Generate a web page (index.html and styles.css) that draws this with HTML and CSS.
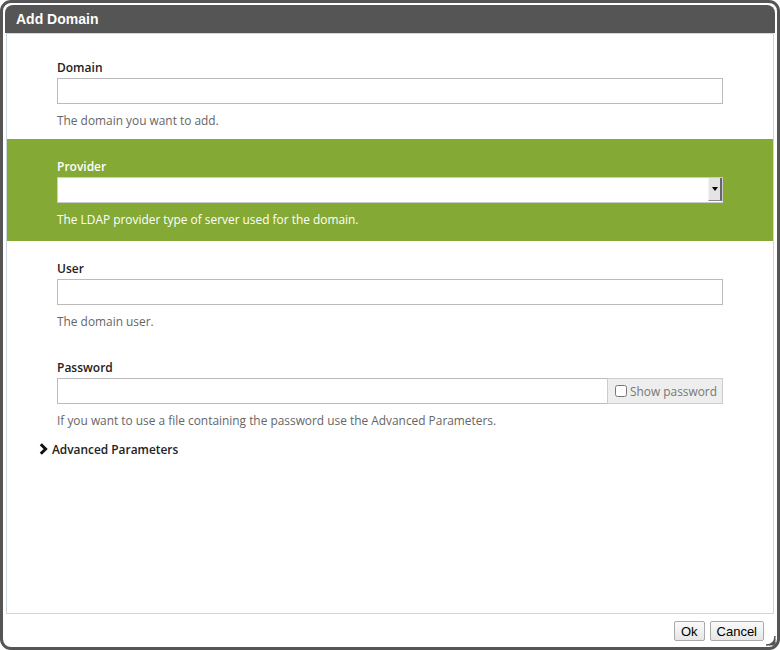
FILE: index.html
```html
<!DOCTYPE html>
<html lang="en">
<head>
    <meta charset="UTF-8">
    <title>Add Domain</title>
    <link rel="stylesheet" href="styles.css">
</head>
<body>
    <div class="dialog">
        <div class="dialog-title">Add Domain</div>
        <div class="dialog-body">
            <div class="form-group">
                <label for="domain">Domain</label>
                <input type="text" id="domain">
                <p class="hint">The domain you want to add.</p>
            </div>
            <div class="form-group active">
                <label for="provider">Provider</label>
                <div class="select">
                    <select id="provider"></select>
                    <span class="select-arrow"></span>
                </div>
                <p class="hint">The LDAP provider type of server used for the domain.</p>
            </div>
            <div class="form-group">
                <label for="user">User</label>
                <input type="text" id="user">
                <p class="hint">The domain user.</p>
            </div>
            <div class="form-group">
                <label for="password">Password</label>
                <div class="input-group">
                    <input type="password" id="password">
                    <label class="addon"><input type="checkbox">Show password</label>
                </div>
                <p class="hint">If you want to use a file containing the password use the Advanced Parameters.</p>
            </div>
            <div class="advanced">
                <svg width="9" height="12" viewBox="0 0 9 12"><path d="M1.8 1.2 L6.6 6 L1.8 10.8" fill="none" stroke="#111" stroke-width="3"/></svg>
                Advanced Parameters
            </div>
        </div>
        <div class="dialog-footer">
            <button class="btn">Ok</button>
            <button class="btn">Cancel</button>
            <svg class="grip" width="12" height="12" viewBox="0 0 12 12">
                <path d="M11 2 Q11 11 2 11 M11 5 Q11 11 5 11 M11 8 Q11 11 8 11" fill="none" stroke="#555" stroke-width="1.5"/>
            </svg>
        </div>
    </div>
</body>
</html>
```

FILE: styles.css
```css
body {
    margin: 0;
    background: #fff;
    font-family: 'Open Sans', sans-serif;
}
.dialog {
    width: 780px;
    height: 650px;
    box-sizing: border-box;
    border: 3px solid #555;
    border-radius: 11px;
    padding: 2px 2px 0 2px;
    display: flex;
    flex-direction: column;
}
.dialog-title {
    height: 28px;
    line-height: 28px;
    background: #555;
    color: #fff;
    border-radius: 8px 8px 0 0;
    padding-left: 11px;
    font-family: 'Liberation Sans', Arial, sans-serif;
    font-weight: bold;
    font-size: 14px;
}
.dialog-body {
    flex: 1;
    margin: 0 1px 0 1px;
    border: 1px solid #cdd6de;
    padding-top: 6px;
}
.form-group {
    padding: 20px 50px 11px;
}
.form-group.active {
    background: #84a934;
    padding-bottom: 14px;
}
.form-group label {
    display: block;
    font-size: 12px;
    font-weight: 600;
    color: #222;
    line-height: 16px;
    margin-bottom: 2px;
}
.form-group.active label,
.form-group.active .hint {
    color: #fff;
}
.form-group input[type=text],
.form-group input[type=password],
.select select {
    display: block;
    width: 100%;
    height: 26px;
    box-sizing: border-box;
    border: 1px solid #bbb;
    margin: 0;
    padding: 3px 6px;
    font-family: 'Open Sans', sans-serif;
    font-size: 12px;
    background: #fff;
}
.select {
    position: relative;
}
.select select {
    appearance: none;
    -webkit-appearance: none;
    border-color: #ccc;
}
.select-arrow {
    position: absolute;
    right: 1px;
    top: 1px;
    width: 11px;
    height: 22px;
    background: #e4e4e4;
    border-left: 1px solid #f4f4f4;
    border-right: 2px solid #666;
    border-bottom: 1px solid #888;
}
.select-arrow::after {
    content: '';
    position: absolute;
    left: 3px;
    top: 9px;
    border-left: 3px solid transparent;
    border-right: 3px solid transparent;
    border-top: 4px solid #000;
}
.hint {
    margin: 8px 0 0;
    font-size: 11.9px;
    line-height: 16px;
    color: #666;
}
.input-group {
    display: flex;
}
.input-group input[type=password] {
    flex: 1;
    border-right: none;
}
.form-group .addon {
    display: flex;
    align-items: center;
    flex: none;
    width: 116px;
    height: 26px;
    box-sizing: border-box;
    margin: 0;
    padding: 0 0 0 7px;
    background: #eee;
    border: 1px solid #ccc;
    font-weight: normal;
    color: #777;
    font-size: 11.9px;
    white-space: nowrap;
}
.addon input {
    margin: 0 3px 0 0;
    width: 12px;
    height: 12px;
}
.advanced {
    display: flex;
    align-items: center;
    gap: 4px;
    margin: 2px 0 0 32px;
    font-size: 11.9px;
    font-weight: 600;
    color: #222;
    line-height: 16px;
}
.dialog-footer {
    flex: none;
    height: 33px;
    display: flex;
    justify-content: flex-end;
    align-items: flex-start;
    padding-top: 7px;
    box-sizing: border-box;
}
.btn {
    height: 20px;
    margin-left: 5px;
    padding: 0 6px;
    font-family: 'Liberation Sans', Arial, sans-serif;
    font-size: 13px;
    color: #000;
    background: linear-gradient(#fafafa, #e6e6e6);
    border: 1px solid #aaa;
    border-radius: 2px;
}
.grip {
    flex: none;
    align-self: flex-end;
    margin: 0 -1px 1px 0;
}
```
